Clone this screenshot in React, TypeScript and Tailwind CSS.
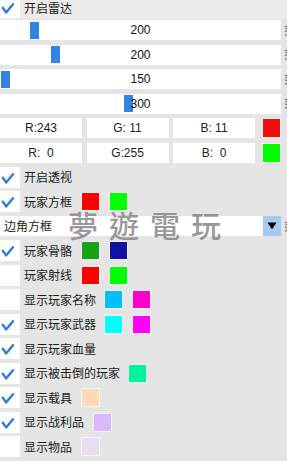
import React from "react";

const CJK = { fontFamily: '"Noto Sans CJK SC", "Noto Sans", sans-serif' };

function Check({ on }: { on: boolean }) {
  return (
    <div className="w-[20px] h-[21px] bg-white shrink-0 flex items-center justify-center">
      {on && (
        <svg width="20" height="21" viewBox="0 0 20 21">
          <path d="M2.8 10.8 L6.1 15.4 L13 7.2" fill="none" stroke="#2f7dd9" strokeWidth="2.4" strokeLinecap="round" strokeLinejoin="round" />
        </svg>
      )}
    </div>
  );
}

function Swatch({ color, ml = "ml-[9px]" }: { color: string; ml?: string }) {
  return <div className={`w-[19px] h-[19px] border border-[#f4f4f4] shrink-0 ${ml}`} style={{ backgroundColor: color }} />;
}

function Row({ on, label, swatches = [] as string[], first }: { on: boolean; label: string; swatches?: string[]; first?: string }) {
  return (
    <div className="h-[20px] flex items-center shrink-0">
      <Check on={on} />
      <span className="ml-[4px] text-[12px] text-[#1b1b1b] leading-none whitespace-nowrap" style={CJK}>{label}</span>
      {swatches.map((c, i) => (
        <Swatch key={i} color={c} ml={i === 0 ? first || "ml-[9px]" : "ml-[9px]"} />
      ))}
    </div>
  );
}

function Edge({ ch }: { ch: string }) {
  return <span className="ml-[3px] text-[11px] text-[#555] leading-none whitespace-nowrap" style={CJK}>{ch}</span>;
}

function Slider({ pos, value }: { pos: number; value: string }) {
  return (
    <div className="h-[20px] flex items-center shrink-0">
      <div className="relative w-[281px] h-[20px] bg-white shrink-0 flex items-center justify-center">
        <div className="absolute top-[1.5px] w-[9px] h-[17px] bg-[#3383e3]" style={{ left: pos }} />
        <span className="relative text-[12px] text-[#111] leading-none" style={{ fontFamily: '"Liberation Sans", Arial, sans-serif' }}>{value}</span>
      </div>
      <Edge ch="范" />
    </div>
  );
}

function Box({ text }: { text: string }) {
  return (
    <div className="w-[82px] h-[20px] bg-white shrink-0 flex items-center justify-center">
      <span className="text-[12px] text-[#222] leading-none whitespace-pre" style={{ fontFamily: '"Liberation Sans", Arial, sans-serif' }}>{text}</span>
    </div>
  );
}

function RGBRow({ r, g, b, color }: { r: string; g: string; b: string; color: string }) {
  return (
    <div className="h-[20px] flex items-center shrink-0 gap-[4.5px]">
      <Box text={r} />
      <Box text={g} />
      <Box text={b} />
      <div className="w-[19px] h-[20px] border border-[#f4f4f4] shrink-0 ml-[2.5px]" style={{ backgroundColor: color }} />
      <Edge ch="范" />
    </div>
  );
}

export default function App() {
  return (
    <div className="relative w-[287px] h-[461px] overflow-hidden bg-[#e5e5e5]">
      <div className="absolute left-0 top-0 w-[287px] h-[19px] bg-[#ebebeb]" />
      <div className="relative flex flex-col gap-[4.5px]">
        <div className="h-[15.5px] flex items-center shrink-0">
          <Check on={true} />
          <span className="ml-[4px] text-[12px] text-[#1b1b1b] leading-none" style={CJK}>开启雷达</span>
        </div>
        <Slider pos={30} value="200" />
        <Slider pos={51} value="200" />
        <Slider pos={1} value="150" />
        <Slider pos={124} value="300" />
        <RGBRow r="R:243" g="G: 11" b="B: 11" color="#f30b0b" />
        <RGBRow r="R:  0" g="G:255" b="B:  0" color="#00ff00" />
        <Row on={true} label="开启透视" />
        <Row on={true} label="玩家方框" swatches={["#ff0000", "#00ff00"]} />
        <div className="h-[20px] flex items-center shrink-0">
          <div className="w-[263px] h-[20px] bg-white flex items-center pl-[4px] shrink-0">
            <span className="text-[12px] text-[#1b1b1b] leading-none" style={CJK}>边角方框</span>
          </div>
          <div className="w-[18px] h-[20px] bg-[#a8c9f0] flex items-center justify-center shrink-0">
            <svg width="10" height="8" viewBox="0 0 10 8">
              <path d="M0.5 0.5 L9.5 0.5 L5 7.5 Z" fill="#000" />
            </svg>
          </div>
          <Edge ch="范" />
        </div>
        <Row on={true} label="玩家骨骼" swatches={["#15a315", "#1212a0"]} />
        <Row on={false} label="玩家射线" swatches={["#ff0000", "#00ff00"]} />
        <Row on={false} label="显示玩家名称" swatches={["#00bfff", "#ff00cc"]} first="ml-[8px]" />
        <Row on={true} label="显示玩家武器" swatches={["#00ffff", "#ff00ff"]} first="ml-[8px]" />
        <Row on={true} label="显示玩家血量" />
        <Row on={true} label="显示被击倒的玩家" swatches={["#00f59a"]} first="ml-[8px]" />
        <Row on={true} label="显示载具" swatches={["#ffdab9"]} />
        <Row on={true} label="显示战利品" swatches={["#d8b8ff"]} />
        <Row on={false} label="显示物品" swatches={["#e6dff0"]} />
      </div>
      <div
        className="absolute left-[68px] top-[209px] text-[30px] leading-none tracking-[11px] whitespace-nowrap text-[rgba(120,120,120,0.75)] font-medium pointer-events-none"
        style={{ fontFamily: '"Noto Sans CJK TC", "Noto Sans CJK SC", sans-serif' }}
      >
        夢遊電玩
      </div>
    </div>
  );
}
